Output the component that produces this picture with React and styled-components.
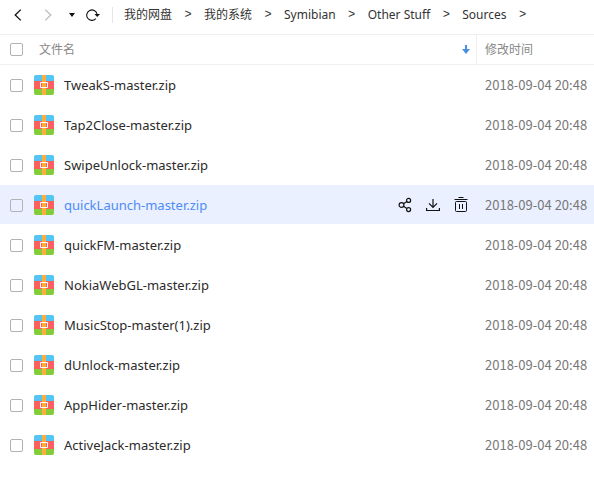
import { useState } from "react";
import styled, { createGlobalStyle } from "styled-components";

const path = ["我的网盘", "我的系统", "Symibian", "Other Stuff", "Sources"];

const files = [
  "TweakS-master.zip",
  "Tap2Close-master.zip",
  "SwipeUnlock-master.zip",
  "quickLaunch-master.zip",
  "quickFM-master.zip",
  "NokiaWebGL-master.zip",
  "MusicStop-master(1).zip",
  "dUnlock-master.zip",
  "AppHider-master.zip",
  "ActiveJack-master.zip",
].map((name) => ({ name, modified: "2018-09-04 20:48" }));

const ZipIcon = () => (
  <svg width='20' height='20' viewBox='0 0 20 20' aria-hidden='true'>
    <path d='M0 6V2a2 2 0 0 1 2-2h16a2 2 0 0 1 2 2v4z' fill='#52c5f5' />
    <path d='M0 6h20v8H0z' fill='#fd5f5e' />
    <path d='M0 14h20v4a2 2 0 0 1-2 2H2a2 2 0 0 1-2-2z' fill='#82cd3a' />
    <path d='M8 0h4v20H8z' fill='#ffae3b' />
    <path d='M6.5 7.5h7v5h-7z' fill='#fd5f5e' stroke='#fff' />
    <path d='M8 8h4v4H8z' fill='#ffae3b' />
  </svg>
);

const BackIcon = () => (
  <svg width='8' height='12' viewBox='0 0 8 12' fill='none' stroke='currentColor'>
    <path d='M6.8.6 1.2 6l5.6 5.4' strokeWidth='1.3' />
  </svg>
);

const ForwardIcon = () => (
  <svg width='8' height='12' viewBox='0 0 8 12' fill='none' stroke='currentColor'>
    <path d='M1.2.6 6.8 6l-5.6 5.4' strokeWidth='1.3' />
  </svg>
);

const CaretIcon = () => (
  <svg width='6' height='4' viewBox='0 0 6 4' fill='currentColor'>
    <path d='M0 0h6L3 4z' />
  </svg>
);

const RefreshIcon = () => (
  <svg width='14' height='12' viewBox='0 0 14 12' fill='none' stroke='currentColor'>
    <path d='M9.8 9.6A5.2 5.2 0 1 1 11 5' strokeWidth='1.1' />
    <path d='M8.5 5H14l-2.8 3z' fill='currentColor' stroke='none' />
  </svg>
);

const SortIcon = () => (
  <svg width='10' height='9' viewBox='-1 0 10 9' fill='#4a8fe2'>
    <path d='M3 0h2v4h3L4 9 0 4h3z' />
  </svg>
);

const ShareIcon = () => (
  <svg width='14' height='16' viewBox='0 0 14 16' fill='none' stroke='currentColor'>
    <g strokeWidth='1.2'>
      <circle cx='3.5' cy='8' r='2.4' />
      <circle cx='10.6' cy='3.4' r='2' />
      <circle cx='10.6' cy='12.6' r='2' />
      <path d='m5.5 6.7 3.4-2.2M5.5 9.3l3.4 2.2' />
    </g>
  </svg>
);

const DownloadIcon = () => (
  <svg width='14' height='16' viewBox='0 0 14 16' fill='none' stroke='currentColor'>
    <g strokeWidth='1.2'>
      <path d='M7 2v8.6M3 6.4l4 4 4-4' />
      <path d='M.6 11v2.5h12.8V11' />
    </g>
  </svg>
);

const TrashIcon = () => (
  <svg width='14' height='16' viewBox='0 0 14 16' fill='none' stroke='currentColor'>
    <path d='M4.5.5h5M.5 2.5h13' />
    <rect x='1.5' y='4.5' width='11' height='10' rx='1' />
    <path d='M5.5 7v5M8.5 7v5' />
  </svg>
);

const App = () => {
  const [active, setActive] = useState("quickLaunch-master.zip");

  return (
    <>
      <GlobalStyle />
      <Toolbar>
        <Controls>
          <IconButton aria-label='Back'>
            <BackIcon />
          </IconButton>
          <IconButton aria-label='Forward' disabled>
            <ForwardIcon />
          </IconButton>
          <IconButton aria-label='History' $width='8px'>
            <CaretIcon />
          </IconButton>
          <IconButton aria-label='Refresh' $width='14px'>
            <RefreshIcon />
          </IconButton>
        </Controls>
        <Breadcrumb>
          {path.map((name) => (
            <li key={name}>
              <a href='#'>{name}</a>
              <span>&gt;</span>
            </li>
          ))}
        </Breadcrumb>
      </Toolbar>
      <FileTable>
        <thead>
          <tr>
            <HeadCell scope='col'>
              <NameLayout>
                <Checkbox aria-label='Select all' />
                <HeadLabel>文件名</HeadLabel>
                <SortIcon />
              </NameLayout>
            </HeadCell>
            <HeadCell scope='col' $date>
              修改时间
            </HeadCell>
          </tr>
        </thead>
        <tbody>
          {files.map(({ name, modified }) => (
            <FileRow
              key={name}
              $active={name === active}
              onMouseEnter={() => setActive(name)}
            >
              <td>
                <NameLayout>
                  <Checkbox aria-label={name} />
                  <ZipIcon />
                  <FileName href='#'>{name}</FileName>
                  {name === active && (
                    <Actions>
                      <IconButton aria-label='Share'>
                        <ShareIcon />
                      </IconButton>
                      <IconButton aria-label='Download'>
                        <DownloadIcon />
                      </IconButton>
                      <IconButton aria-label='Delete'>
                        <TrashIcon />
                      </IconButton>
                    </Actions>
                  )}
                </NameLayout>
              </td>
              <DateCell>{modified}</DateCell>
            </FileRow>
          ))}
        </tbody>
      </FileTable>
    </>
  );
};

const GlobalStyle = createGlobalStyle`
  * {
    box-sizing: border-box;
  }
  body {
    margin: 0;
    background: #fff;
    color: #333;
    font-family: "Noto Sans", "Noto Sans CJK SC", sans-serif;
    font-size: 12px;
    line-height: 20px;
  }
  a {
    color: inherit;
    text-decoration: none;
  }
  svg {
    display: block;
    flex: none;
  }
`;

const Toolbar = styled.nav`
  display: flex;
  align-items: center;
  height: 35px;
  padding-bottom: 4px;
  border-bottom: 1px solid #eee;
`;

const Controls = styled.div`
  display: flex;
  align-items: center;
  gap: 10px;
  height: 16px;
  padding: 0 12px 0 8px;
  border-right: 1px solid #e5e5e5;
`;

const IconButton = styled.button`
  display: flex;
  align-items: center;
  justify-content: center;
  width: ${({ $width }) => $width || "20px"};
  height: 20px;
  padding: 0;
  border: 0;
  background: none;
  color: #111;
  cursor: pointer;
  &:disabled {
    color: #bbb;
    cursor: default;
  }
`;

const Breadcrumb = styled.ol`
  display: flex;
  margin: 0;
  padding: 0 0 0 11px;
  list-style: none;
  white-space: nowrap;
  li {
    display: flex;
  }
  span {
    width: 8px;
    margin: 0 12px;
    font-family: "Liberation Mono", monospace;
    text-align: center;
  }
`;

const FileTable = styled.table`
  width: 100%;
  table-layout: fixed;
  border-collapse: separate;
  border-spacing: 0;
  td,
  th {
    padding: 0;
  }
`;

const HeadCell = styled.th`
  width: ${({ $date }) => ($date ? "118px" : "auto")};
  height: 30px;
  border-bottom: 1px solid #f2f2f2;
  color: #888;
  font-weight: normal;
  text-align: left;
  && {
    padding-left: ${({ $date }) => ($date ? "8px" : "0")};
    border-left: ${({ $date }) => ($date ? "1px solid #eee" : "0")};
  }
`;

const NameLayout = styled.div`
  display: flex;
  align-items: center;
  padding: 0 5px 0 10px;
`;

const HeadLabel = styled.span`
  flex: 1;
  margin-left: 16px;
`;

const Checkbox = styled.input.attrs({ type: "checkbox" })`
  appearance: none;
  flex: none;
  width: 13px;
  height: 13px;
  margin: 0;
  border: 1px solid #b2b2b2;
  border-radius: 2px;
  &:checked {
    background: #4a90f0;
  }
  & + svg {
    margin: 0 10px 0 11px;
  }
`;

const FileName = styled.a`
  flex: 1;
  overflow: hidden;
  font-size: 13px;
  text-overflow: ellipsis;
  white-space: nowrap;
`;

const FileRow = styled.tr`
  && td {
    height: 40px;
    padding-top: 1px;
    border-bottom: 1px solid #fff;
    background: ${({ $active }) => ($active ? "#eaf0ff" : "#fff")};
  }
  ${FileName} {
    color: ${({ $active }) => ($active ? "#4d8cf5" : "#2b2b2b")};
  }
`;

const Actions = styled.div`
  display: flex;
  gap: 8px;
`;

const DateCell = styled.td`
  color: #777;
  font-family: "Noto Sans CJK SC", sans-serif;
  font-size: 13px;
  white-space: nowrap;
  && {
    padding-left: 9px;
  }
`;

export default App;
